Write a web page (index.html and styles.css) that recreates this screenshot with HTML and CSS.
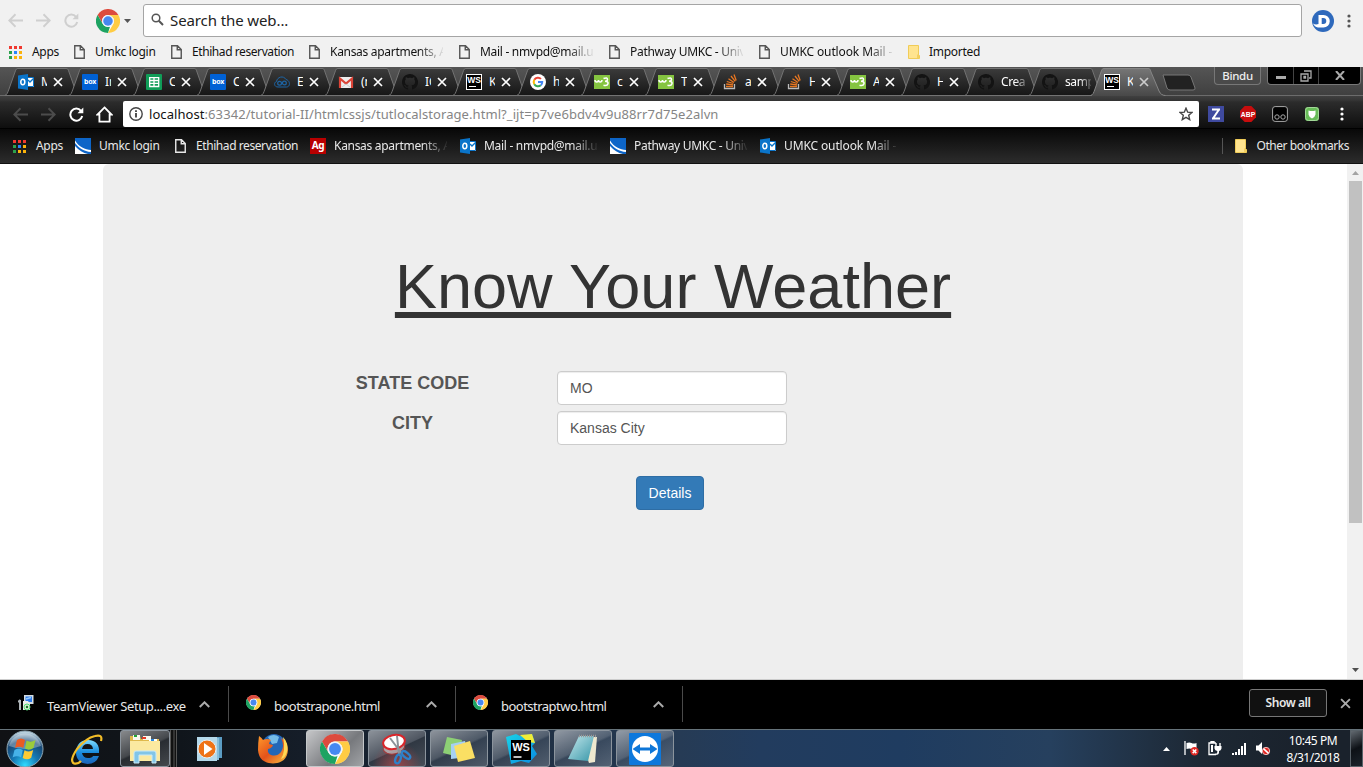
FILE: index.html
```html
<!DOCTYPE html>
<html lang="en">
<head>
<meta charset="utf-8">
<title>Know Your Weather</title>
<link rel="stylesheet" href="styles.css">
</head>
<body>
<svg class="defs" width="0" height="0" aria-hidden="true">
  <defs>
    <linearGradient id="gTab" x1="0" y1="0" x2="0" y2="1"><stop offset="0" stop-color="#3b3b3b"/><stop offset="1" stop-color="#161616"/></linearGradient>
    <linearGradient id="gActive" x1="0" y1="0" x2="0" y2="1"><stop offset="0" stop-color="#767676"/><stop offset="1" stop-color="#484848"/></linearGradient>
    <radialGradient id="gOrb" cx=".5" cy=".95" r=".9"><stop offset="0" stop-color="#31dcff"/><stop offset=".4" stop-color="#1478b4"/><stop offset=".75" stop-color="#174875"/><stop offset="1" stop-color="#b8cfdd"/></radialGradient>
    <linearGradient id="gIe" x1="0" y1="0" x2="0" y2="1"><stop offset="0" stop-color="#7fdcff"/><stop offset=".5" stop-color="#1b8fe0"/><stop offset="1" stop-color="#1b63b8"/></linearGradient>
    <linearGradient id="gFox" x1="0" y1="0" x2="1" y2="1"><stop offset="0" stop-color="#ff9a2a"/><stop offset=".5" stop-color="#e4521b"/><stop offset="1" stop-color="#f9c440"/></linearGradient>
    <linearGradient id="gPad" x1="0" y1="0" x2="1" y2="1"><stop offset="0" stop-color="#c4e8ec"/><stop offset="1" stop-color="#3796a8"/></linearGradient>
    <linearGradient id="gWs" x1="0" y1="0" x2="1" y2="1"><stop offset="0" stop-color="#18d2e8"/><stop offset="1" stop-color="#0a8be0"/></linearGradient>
  </defs>
  <symbol id="tab" viewBox="0 0 76 29"><path d="M.5 28.5C3 28 3.500 26 5 22L11 5C12 2 12.500 1.500 14 1.500H62C64 1.500 64 2 65 5L71 22C72.500 26 73 28 75.500 28.500Z" fill="url(#gTab)" stroke="#737373"/></symbol>
  <symbol id="tabOn" viewBox="0 0 76 29"><path d="M.5 29C3 28.500 3.500 26 5 22L11 5C12 2 12.500 1.500 14 1.500H58C60 1.500 60 2 61 5L69 24Q71 28.500 75.500 28.500V29Z" fill="url(#gActive)"/><path d="M.5 28.500C3 28 3.500 26 5 22L11 5C12 2 12.500 1.500 14 1.500H58C60 1.500 60 2 61 5L69 24Q71 28.500 75.500 28.500" fill="none" stroke="#858585"/></symbol>
  <symbol id="chrome" viewBox="0 0 48 48"><circle cx="24" cy="24" r="23.500" fill="#fff"/><path d="M3.200 12A24 24 0 0 1 44.800 12H24A12 12 0 0 0 13.600 30Z" fill="#dd4b3e"/><path d="M3.200 12L13.600 30A12 12 0 0 0 28 35.300L24 48A24 24 0 0 1 3.200 12Z" fill="#1da362"/><path d="M44.800 12A24 24 0 0 1 24 48L34.400 30A12 12 0 0 0 34.400 18L24 12Z" fill="#fc4"/><circle cx="24" cy="24" r="12" fill="#eef3fb"/><circle cx="24" cy="24" r="9.500" fill="#4688f1"/></symbol>
  <symbol id="apps" viewBox="0 0 13 13"><path d="M0 0h3v3H0zM5 0h3v3H5zM10 0h3v3h-3z" fill="#f0382f"/><path d="M0 5h3v3H0zM0 10h3v3H0z" fill="#2ba24c"/><path d="M5 5h3v3H5z" fill="#2a84fc"/><path d="M10 5h3v3h-3zM5 10h3v3H5zM10 10h3v3h-3z" fill="#fbb30b"/></symbol>
  <symbol id="doc" viewBox="0 0 11 14"><path d="M.75.750H6.500L10.250 4.500V13.250H.750ZM6.250.750V4.750H10.250" fill="none" stroke="currentColor" stroke-width="1.400"/></symbol>
  <symbol id="folder" viewBox="0 0 12 14"><path d="M.5.500H10.500V9.500L11.500 10.500V13.500H.500Z" fill="#ffe48f" stroke="#f0cc58"/><path d="M10 9.500V13" stroke="#e8b930"/></symbol>
  <symbol id="back" viewBox="0 0 14 14"><path d="M14 7H1.500M7 1.200L1.200 7L7 12.800" fill="none" stroke="currentColor" stroke-width="1.800"/></symbol>
  <symbol id="forward" viewBox="0 0 14 14"><path d="M0 7H12.500M7 1.200L12.800 7L7 12.800" fill="none" stroke="currentColor" stroke-width="1.800"/></symbol>
  <symbol id="reload" viewBox="0 0 15 15"><path d="M12 3.800A6 6 0 1 0 13.200 9" fill="none" stroke="currentColor" stroke-width="2"/><path d="M14.300.500V6.300H8.500Z" fill="currentColor"/></symbol>
  <symbol id="close" viewBox="0 0 10 10"><path d="M1 1L9 9M9 1L1 9" stroke="currentColor" stroke-width="1.700"/></symbol>
  <symbol id="dots" viewBox="0 0 4 14"><circle cx="2" cy="2" r="1.600"/><circle cx="2" cy="7" r="1.600"/><circle cx="2" cy="12" r="1.600"/></symbol>
  <symbol id="outlook" viewBox="0 0 16 16"><path d="M8 4h8v9H8z" fill="#fff"/><path d="M8 3.500h7.500v9H8" fill="none" stroke="#0a74c9"/><path d="M10 6l2 2 3.500-3.500" fill="none" stroke="#0a74c9" stroke-width="1.400"/><path d="M0 1.500L10 0V16L0 14.500Z" fill="#0a74c9"/><ellipse cx="4.800" cy="8" rx="2" ry="2.700" fill="none" stroke="#fff" stroke-width="1.500"/></symbol>
  <symbol id="sheets" viewBox="0 0 16 16"><rect width="16" height="16" rx="1" fill="#109d58"/><path d="M3.700 3.700h9v8.800h-9zM3.700 6.500h9M3.700 9.400h9M8 3.700v8.800" fill="none" stroke="#fff" stroke-width="1.300"/></symbol>
  <symbol id="cloud" viewBox="0 0 16 16"><path d="M4 13C0 13-.500 8.500 2.500 7.500C3 3 9.500 1 12 5.500C16.500 6.500 16.500 13 12.500 13Z" fill="none" stroke="#1d65a6"/><circle cx="5.600" cy="9.300" r="1.900" fill="none" stroke="#1d65a6" stroke-width="1.200"/><circle cx="10.400" cy="9" r="1.900" fill="none" stroke="#1d65a6" stroke-width="1.200"/></symbol>
  <symbol id="gmail" viewBox="0 0 16 16"><path d="M1 3h14v11H1z" fill="#eee"/><path d="M2 14V4.500L8 9.500L14 4.500V14" fill="none" stroke="#dc4437" stroke-width="2.200"/><path d="M4 13L8 10L12 13" stroke="#ccc" fill="none"/></symbol>
  <symbol id="github" viewBox="0 0 16 16"><path fill="#131313" d="M8 0C3.580 0 0 3.580 0 8c0 3.540 2.290 6.530 5.470 7.590.4.070.550-.170.550-.380v-1.490c-2.010.370-2.530-.490-2.690-.940-.090-.230-.480-.940-.820-1.130-.280-.150-.680-.520-.010-.530.630-.010 1.080.580 1.230.820.720 1.210 1.870.870 2.330.660.070-.520.280-.870.510-1.070-1.780-.2-3.640-.890-3.640-3.950 0-.870.310-1.590.820-2.150-.080-.2-.360-1.020.080-2.120 0 0 .670-.210 2.200.820.640-.180 1.320-.270 2-.270s1.360.090 2 .270c1.530-1.040 2.200-.820 2.200-.820.440 1.100.160 1.920.080 2.120.510.560.820 1.270.820 2.150 0 3.070-1.870 3.750-3.650 3.950.290.250.540.730.540 1.480v2.200c0 .210.150.460.550.380A8 8 0 0 0 8 0Z"/></symbol>
  <symbol id="google" viewBox="0 0 16 16"><circle cx="8" cy="8" r="8" fill="#fff"/><path d="M4.300 5.800A4.300 4.300 0 0 1 11 4.900" fill="none" stroke="#ea4335" stroke-width="2"/><path d="M4.300 5.800A4.500 4.500 0 0 0 4.300 10.200" fill="none" stroke="#fbbc05" stroke-width="2"/><path d="M4.300 10.200A4.300 4.300 0 0 0 10.800 11.200" fill="none" stroke="#34a853" stroke-width="2"/><path d="M8 8H12.200Q12.200 10.200 10.800 11.300" fill="none" stroke="#4285f4" stroke-width="2"/></symbol>
  <symbol id="w3" viewBox="0 0 16 14"><rect width="16" height="14" fill="#85c440"/><path d="M1 5q0 2 1.700 2T4.500 5q0 2 1.700 2T8 5M9.500 3.500q4-1.500 4 .8 0 2-2.500 2 3.500 0 3 2.500-.8 2.500-4.500 1.500" fill="none" stroke="#fff" stroke-width="1.500"/></symbol>
  <symbol id="so" viewBox="0 0 16 16"><path d="M2.500 10v4.500h10V10" fill="none" stroke="#bcbbbb" stroke-width="1.300"/><path d="M4 12.500h7M4.200 10l7 .8M4.800 7.500l6.500 2M6.500 4.700l5.500 3.800M9 2l4.200 5.300M12 .5l2.200 6" stroke="#e87722" stroke-width="1.300"/></symbol>
  <symbol id="umkc" viewBox="0 0 16 16"><path d="M0 0h16v16H0z" fill="#0d65c8"/><path d="M0 2.500C4 9 10 11.500 16 12V14C9 13.500 4 10 0 5ZM0 8C4 12.500 8 15 13 16H0Z" fill="#fff"/></symbol>
  <symbol id="chev" viewBox="0 0 10 6"><path d="M.7 5.300L5 1L9.300 5.300" fill="none" stroke="#aaa" stroke-width="1.800"/></symbol>
</svg>

<div class="outer-bar">
  <svg class="nav-i"><use href="#back"/></svg>
  <svg class="nav-i"><use href="#forward"/></svg>
  <svg class="nav-i"><use href="#reload"/></svg>
  <svg class="engine"><use href="#chrome"/></svg>
  <svg class="caret" viewBox="0 0 7 4"><path d="M0 0h7L3.500 4Z" fill="#555"/></svg>
  <div class="search">
    <svg width="13" height="13" viewBox="0 0 13 13"><circle cx="5" cy="5" r="3.800" fill="none" stroke="#555" stroke-width="1.500"/><path d="M7.800 7.800L12 12" stroke="#555" stroke-width="2"/></svg>
    <span>Search the web...</span>
  </div>
  <svg class="dash" viewBox="0 0 22 22"><circle cx="11" cy="11" r="11" fill="#2e69bc"/><path d="M6.500 5H11.500A6.200 6.200 0 0 1 11.500 17.500H6Q2.500 17 1 13.500Q3.500 15 6.500 14Z" fill="#fff"/><path d="M9.700 8H11.300A3 3 0 0 1 11.300 14H9.700Z" fill="#2e69bc"/></svg>
  <svg class="dots dim"><use href="#dots"/></svg>
</div>

<div class="marks light">
  <div class="mark m-apps"><svg class="i13"><use href="#apps"/></svg><span>Apps</span></div>
  <div class="mark m-97"><svg class="idoc"><use href="#doc"/></svg><span>Umkc login</span></div>
  <div class="mark m-138"><svg class="idoc"><use href="#doc"/></svg><span>Ethihad reservation</span></div>
  <div class="mark m-150"><svg class="idoc"><use href="#doc"/></svg><span class="fade">Kansas apartments, A</span></div>
  <div class="mark m-150"><svg class="idoc"><use href="#doc"/></svg><span class="fade">Mail - nmvpd@mail.u</span></div>
  <div class="mark m-150"><svg class="idoc"><use href="#doc"/></svg><span class="fade">Pathway UMKC - Univ</span></div>
  <div class="mark m-149"><svg class="idoc"><use href="#doc"/></svg><span class="fade wider">UMKC outlook Mail - </span></div>
  <div class="mark"><svg class="ifold"><use href="#folder"/></svg><span>Imported</span></div>
</div>

<div class="tabstrip">
  <div class="tab"><svg class="shape"><use href="#tab"/></svg><svg class="fav"><use href="#outlook"/></svg><span>M</span><svg class="x"><use href="#close"/></svg></div>
  <div class="tab"><svg class="shape"><use href="#tab"/></svg><i class="fav box">box</i><span>In</span><svg class="x"><use href="#close"/></svg></div>
  <div class="tab"><svg class="shape"><use href="#tab"/></svg><svg class="fav"><use href="#sheets"/></svg><span>C</span><svg class="x"><use href="#close"/></svg></div>
  <div class="tab"><svg class="shape"><use href="#tab"/></svg><i class="fav box">box</i><span>C</span><svg class="x"><use href="#close"/></svg></div>
  <div class="tab"><svg class="shape"><use href="#tab"/></svg><svg class="fav"><use href="#cloud"/></svg><span>E</span><svg class="x"><use href="#close"/></svg></div>
  <div class="tab"><svg class="shape"><use href="#tab"/></svg><svg class="fav"><use href="#gmail"/></svg><span>(n</span><svg class="x"><use href="#close"/></svg></div>
  <div class="tab"><svg class="shape"><use href="#tab"/></svg><svg class="fav"><use href="#github"/></svg><span>IC</span><svg class="x"><use href="#close"/></svg></div>
  <div class="tab"><svg class="shape"><use href="#tab"/></svg><i class="fav ws">WS</i><span>K</span><svg class="x"><use href="#close"/></svg></div>
  <div class="tab"><svg class="shape"><use href="#tab"/></svg><svg class="fav"><use href="#google"/></svg><span>h</span><svg class="x"><use href="#close"/></svg></div>
  <div class="tab"><svg class="shape"><use href="#tab"/></svg><svg class="fav"><use href="#w3"/></svg><span>c</span><svg class="x"><use href="#close"/></svg></div>
  <div class="tab"><svg class="shape"><use href="#tab"/></svg><svg class="fav"><use href="#w3"/></svg><span>T</span><svg class="x"><use href="#close"/></svg></div>
  <div class="tab"><svg class="shape"><use href="#tab"/></svg><svg class="fav"><use href="#so"/></svg><span>a</span><svg class="x"><use href="#close"/></svg></div>
  <div class="tab"><svg class="shape"><use href="#tab"/></svg><svg class="fav"><use href="#so"/></svg><span>H</span><svg class="x"><use href="#close"/></svg></div>
  <div class="tab"><svg class="shape"><use href="#tab"/></svg><svg class="fav"><use href="#w3"/></svg><span>A</span><svg class="x"><use href="#close"/></svg></div>
  <div class="tab"><svg class="shape"><use href="#tab"/></svg><svg class="fav"><use href="#github"/></svg><span>H</span><svg class="x"><use href="#close"/></svg></div>
  <div class="tab wide"><svg class="shape"><use href="#tab"/></svg><svg class="fav"><use href="#github"/></svg><span>Crea</span></div>
  <div class="tab wide"><svg class="shape"><use href="#tab"/></svg><svg class="fav"><use href="#github"/></svg><span>samp</span></div>
  <div class="tab on"><svg class="shape"><use href="#tabOn"/></svg><i class="fav ws">WS</i><span>K</span><svg class="x"><use href="#close"/></svg></div>
  <svg class="newtab" viewBox="0 0 34 17"><path d="M1 1H26Q28 1 29 3L33 14Q33.500 16 31 16H8Q6 16 5 14Z" fill="#222" stroke="#777"/></svg>
  <div class="user">Bindu</div>
  <div class="win">
    <div class="w1"><i></i></div>
    <div class="w2"><svg width="12" height="12" viewBox="0 0 12 12"><path d="M4 1h7v7H9M1 4h7v7H1zM4 6.500h1.500V8H4z" fill="none" stroke="#aaa" stroke-width="1.300"/></svg></div>
    <div class="w3"><svg width="10" height="9" viewBox="0 0 10 9"><path d="M1 0L9 9M9 0L1 9" stroke="#aaa" stroke-width="2"/></svg></div>
  </div>
</div>

<div class="toolbar">
  <svg class="nav-i off"><use href="#back"/></svg>
  <svg class="nav-i off"><use href="#forward"/></svg>
  <svg class="nav-i"><use href="#reload"/></svg>
  <svg class="home" viewBox="0 0 16 16"><path d="M8 1.400L14.500 8H12.800V14.700H3.200V8H1.500Z" fill="none" stroke="#fff" stroke-width="1.700"/></svg>
  <div class="url">
    <svg width="14" height="14" viewBox="0 0 14 14"><circle cx="7" cy="7" r="6.200" fill="none" stroke="#444" stroke-width="1.400"/><path d="M7 6v4.500M7 3.300v1.600" stroke="#333" stroke-width="1.700"/></svg>
    <span><b>localhost</b>:63342/tutorial-II/htmlcssjs/tutlocalstorage.html?_ijt=p7ve6bdv4v9u88rr7d75e2alvn</span>
    <svg class="star" viewBox="0 0 14 14"><path d="M7 1.200L8.700 5.200L13 5.500L9.700 8.300L10.700 12.600L7 10.300L3.300 12.600L4.300 8.300L1 5.500L5.300 5.200Z" fill="none" stroke="#444" stroke-width="1.400"/></svg>
  </div>
  <svg class="ext" viewBox="0 0 16 16"><path d="M0 0h16v16H0z" fill="#3f4a9f"/><path d="M4 3.500h8M11 3.500L5 12.500M4 12.500h8" stroke="#fff" stroke-width="2"/></svg>
  <svg class="ext" viewBox="0 0 16 16"><path d="M4.700 0h6.600L16 4.700v6.600L11.300 16H4.700L0 11.300V4.700Z" fill="#c70d0d"/><text x="8" y="10.500" text-anchor="middle" class="t-abp">ABP</text></svg>
  <svg class="ext" viewBox="0 0 16 16"><rect x=".6" y=".6" width="14.800" height="14.800" rx="2.500" fill="#000" stroke="#aaa"/><circle cx="5" cy="11" r="2.200" fill="none" stroke="#aaa"/><circle cx="11" cy="11" r="2.200" fill="none" stroke="#aaa"/></svg>
  <svg class="ext" viewBox="0 0 16 16"><rect x="1" y="1" width="14" height="14" rx="3" fill="#68bc58"/><rect x="1.500" y="1.500" width="13" height="13" rx="3" fill="none" stroke="#a4d89a"/><path d="M4.500 4.500Q8 5.500 11.500 4.500V8.500Q11 11 8 12.500Q5 11 4.500 8.500Z" fill="#fff"/></svg>
  <svg class="dots"><use href="#dots"/></svg>
</div>

<div class="marks dark">
  <div class="mark m-apps"><svg class="i13"><use href="#apps"/></svg><span>Apps</span></div>
  <div class="mark m-100"><svg class="i16"><use href="#umkc"/></svg><span>Umkc login</span></div>
  <div class="mark m-135"><svg class="idoc"><use href="#doc"/></svg><span>Ethihad reservation</span></div>
  <div class="mark m-150"><i class="i16 ag">Ag</i><span class="fade">Kansas apartments, A</span></div>
  <div class="mark m-150"><svg class="i16"><use href="#outlook"/></svg><span class="fade">Mail - nmvpd@mail.u</span></div>
  <div class="mark m-150"><svg class="i16"><use href="#umkc"/></svg><span class="fade">Pathway UMKC - Univ</span></div>
  <div class="mark m-149"><svg class="i16"><use href="#outlook"/></svg><span class="fade wider">UMKC outlook Mail - </span></div>
  <div class="mark other"><svg class="ifold"><use href="#folder"/></svg><span>Other bookmarks</span></div>
</div>

<div class="page">
  <main class="jumbotron">
    <h1>Know Your Weather</h1>
    <form class="form">
      <label for="state">STATE CODE</label>
      <input id="state" type="text" value="MO">
      <label for="city">CITY</label>
      <input id="city" type="text" value="Kansas City">
      <div class="actions"><button type="button">Details</button></div>
    </form>
  </main>
  <div class="scroll">
    <svg width="7" height="4" viewBox="0 0 7 4"><path d="M0 4L3.500 0L7 4Z" fill="#a3a3a3"/></svg>
    <div class="thumb"></div>
    <svg width="7" height="4" viewBox="0 0 7 4"><path d="M0 0L3.500 4L7 0Z" fill="#505050"/></svg>
  </div>
</div>

<div class="downloads">
  <div class="dl first">
    <svg class="setup" viewBox="0 0 16 16"><path d="M6 0h9.500v9H6z" fill="#d5dde2"/><path d="M7.500 1.500H14V7H7.500z" fill="#2d7bea"/><path d="M8 4l5-1.500" stroke="#9cf" stroke-width="1.500"/><path d="M2 5v10M0 7L2.500 5" stroke="#aeb4b8" stroke-width="2"/><path d="M5 6h5l2 3v6H5z" fill="#e9eeea"/><circle cx="9" cy="12" r="3" fill="#d6e9d4" stroke="#5d7"/><circle cx="9" cy="12" r="1.200" fill="#167a23"/></svg>
    <span>TeamViewer Setup....exe</span><svg class="chev"><use href="#chev"/></svg>
  </div>
  <div class="dl"><svg class="ch"><use href="#chrome"/></svg><span class="hs">bootstrapone.html</span><svg class="chev"><use href="#chev"/></svg></div>
  <div class="dl"><svg class="ch"><use href="#chrome"/></svg><span class="hs">bootstraptwo.html</span><svg class="chev"><use href="#chev"/></svg></div>
  <div class="showall">Show all</div>
  <svg class="dlx"><use href="#close"/></svg>
</div>

<div class="taskbar">
  <svg class="orb" viewBox="0 0 38 38"><circle cx="19" cy="19" r="18" fill="url(#gOrb)" stroke="#8da5b2"/><path d="M3 16A16.500 16.500 0 0 1 35 16Q19 22 3 16Z" fill="#fff" opacity=".32"/><path d="M11 10q4-3 8 0l-1.700 8q-4-2.500-8.300 0Z" fill="#ea5b23"/><path d="M20.500 10.500q4 2.500 9-.5l-2 8q-4.500 3-8.500 .5Z" fill="#9bcb3b"/><path d="M8.500 20q4-2.500 8.300 0l-1.700 7.500q-4-2.500-8.500 0Z" fill="#46b2e8"/><path d="M18.500 20.300q4.500 2.500 8.700-.2l-2 7.700q-4 3-8.500 .2Z" fill="#fdcb35"/></svg>
  <div class="launch ie"><svg width="34" height="32" viewBox="0 0 34 32"><path d="M29 20H12q1 5 6 5 4 0 5-2h6q-3 8-11.500 8Q6 30 6 19 7 7 18 7q12 .5 11 13ZM12 16h11q-.5-5-5.500-5Q13 11 12 16Z" fill="url(#gIe)"/><path d="M31 8Q33 1 25 3 16 5 7 16-1 28 4 30.500 8 31.500 11 28" fill="none" stroke="#f3bd28" stroke-width="2.200"/></svg></div>
  <div class="app explorer"><svg width="32" height="30" viewBox="0 0 32 30"><path d="M1 2h10l1 3h18v22H1z" fill="#dfb94c"/><path d="M4 1h7v5H4zM14 2h8v4h-8z" fill="#f8f8ee"/><path d="M5 1h3v2H5z" fill="#22a336"/><path d="M13 3h4v2h-4z" fill="#e33b25"/><path d="M20 5h8v4h-8z" fill="#fff"/><path d="M22 5h3v2h-3z" fill="#2888e2"/><path d="M1 7h30v20H1z" fill="#fbe9a0"/><path d="M5 29V19q0-2 2-2h18q2 0 2 2v10h-4v-8H10v8Z" fill="#82c5e7" stroke="#c9eaf8"/></svg></div>
  <div class="stack"></div>
  <div class="launch wmp"><svg width="27" height="26" viewBox="0 0 27 26"><path d="M7 1h19v21H7z" fill="#5b9dc4"/><path d="M4 2h19v22H4z" fill="#86bedc"/><path d="M1 1h20v24H1z" fill="#b5d9eb"/><circle cx="11" cy="13" r="9" fill="#ef7318" stroke="#e8eef2"/><path d="M8 7l8.500 6L8 19Z" fill="#fff"/></svg></div>
  <div class="launch fox"><svg width="32" height="31" viewBox="0 0 32 31"><circle cx="17" cy="13" r="12" fill="#2367b7"/><path d="M11 4q6-4 11 0l-2 6-5 1Z" fill="#75bde9"/><path d="M2 3q3 2 4 4 4-2 8 0-2 2-2 4l4 1q-1 3-5 4-1 4 3 6 6 2 10-3 4-6 0-14 7 4 7 12-1 13-15 13.500Q2 30 1 17 1 10 2 3Z" fill="url(#gFox)"/><path d="M26 4q6 6 4 15-2 6-6 7 5-8 2-22Z" fill="#ffd955"/></svg></div>
  <div class="app active"><svg class="bigch"><use href="#chrome"/></svg></div>
  <div class="app snip"><svg width="34" height="32" viewBox="0 0 34 32"><ellipse cx="14" cy="14" rx="11" ry="7" fill="#cfc4c4" stroke="#b33" opacity=".7" transform="rotate(-12 14 14)"/><ellipse cx="14" cy="9" rx="11" ry="7" fill="#fff" stroke="#d8262b" stroke-width="2" transform="rotate(-12 14 9)"/><path d="M10 5L22 21M17 3L19 22" stroke="#8b9299" stroke-width="2"/><ellipse cx="18" cy="26" rx="2.500" ry="4.500" fill="none" stroke="#2e81c9" stroke-width="2.400" transform="rotate(20 18 26)"/><ellipse cx="26" cy="22" rx="2.500" ry="5" fill="none" stroke="#2e81c9" stroke-width="2.400" transform="rotate(-50 26 22)"/></svg></div>
  <div class="app"><svg width="34" height="28" viewBox="0 0 34 28"><path d="M5 2l15 3-3 17L1 18Z" fill="#8dd075"/><path d="M9 9l14-3 3 16-17 2Z" fill="#a6d0f2"/><path d="M12 11l16-5 5 17-17 4Z" fill="#fadf63"/></svg></div>
  <div class="app"><svg width="34" height="34" viewBox="0 0 34 34"><path d="M2 5L12 2 16 4 28 2 31 11 28 14 33 22 25 31 17 29 7 32Z" fill="url(#gWs)"/><path d="M16 3L28 2 31 11 24 10Z" fill="#f1ed38"/><path d="M7 8h20v20H7z" fill="#000"/><text x="17" y="18.500" text-anchor="middle" class="t-wsbig">WS</text><path d="M9.500 25h8" stroke="#fff" stroke-width="1.500"/></svg></div>
  <div class="app"><svg width="32" height="30" viewBox="0 0 32 30"><path d="M13 3h17l-2 25-6 1Z" fill="#eee9cf"/><path d="M12 2h15L21 27 1 25Z" fill="url(#gPad)"/><path d="M12 2h17" stroke="#999" stroke-width="2.500" stroke-dasharray="1 1"/></svg></div>
  <div class="app"><svg width="32" height="32" viewBox="0 0 32 32"><rect width="32" height="32" rx="1" fill="#0d78dc"/><circle cx="16" cy="16" r="13" fill="#fff"/><path d="M3.500 16L11 11V14.500H21V11L28.500 16L21 21V17.500H11V21Z" fill="#0e76d8"/></svg></div>
  <div class="tray">
    <svg width="7" height="4" viewBox="0 0 7 4"><path d="M0 4L3.500 0L7 4Z" fill="#fff"/></svg>
    <svg width="15" height="15" viewBox="0 0 15 15"><path d="M1 0v14" stroke="#fff" stroke-width="1.300"/><path d="M2.500 2q3-1 5 0t5 0v6q-3 1-5 0t-5 0Z" fill="#fff"/><circle cx="10.500" cy="10.300" r="4.200" fill="#e02824"/><path d="M8.700 8.500l3.600 3.600M12.300 8.500l-3.600 3.600" stroke="#fff" stroke-width="1.500"/></svg>
    <svg width="14" height="15" viewBox="0 0 14 15"><path d="M3 2V.7h3V2M8 2H1v11.500h7" fill="none" stroke="#fff" stroke-width="1.300"/><path d="M3 4h2v7H3z" fill="#fff"/><path d="M8 2v3M12 2v3" stroke="#fff" stroke-width="1.400"/><path d="M6.500 5h7v2.500q-.5 2-2.500 2.500v1.500q0 2.500-4 2.500v-1.300q2.300 0 2.300-1.500V10q-2.300-.5-2.800-2.500Z" fill="#fff"/></svg>
    <svg width="15" height="12" viewBox="0 0 15 12"><path d="M1 10v2M4 9v3M7 6v6M10 3v9M13 0v12" stroke="#fff" stroke-width="2"/></svg>
    <svg width="15" height="15" viewBox="0 0 15 15"><path d="M0 4.500h2.500L6 1V13L2.500 9.500H0Z" fill="#fff"/><circle cx="10" cy="10" r="3.700" fill="#e02824" stroke="#f7c9c7" stroke-width=".9"/><path d="M7.500 7.600L12.500 12.400" stroke="#fff" stroke-width="1.500"/></svg>
  </div>
  <div class="clock"><span>10:45 PM</span><span>8/31/2018</span></div>
  <div class="peek"></div>
</div>
</body>
</html>
```

FILE: styles.css
```css
* { box-sizing: border-box; }
body {
  margin: 0; width: 1363px; height: 767px; overflow: hidden;
  display: flex; flex-direction: column;
  font: 12px "Noto Sans", "Open Sans", sans-serif; color: #111; background: #fff;
}
svg { display: block; flex: none; }
.defs { position: absolute; }
.t-wsbig { font: bold 11px "Liberation Sans", sans-serif; fill: #fff; }
.t-abp { font: bold 6.800px "Liberation Sans", sans-serif; fill: #fff; }
.nav-i { width: 15px; height: 15px; margin-right: 13px; }
.dots { width: 4px; height: 14px; }
.dim { fill: #555; }

.outer-bar { height: 41px; flex: none; background: #f1f1f1; display: flex; align-items: center; padding-left: 8px; color: #cfcfcf; }
.outer-bar .engine { width: 24px; height: 24px; margin-left: 4px; }
.caret { width: 7px; height: 4px; margin: 0 12px 0 4px; }
.search {
  width: 1159px; height: 33px; border: 1px solid #a5a5a5; border-radius: 3px; background: #fff;
  display: flex; align-items: center; gap: 6px; padding: 0 0 2px 7px; color: #222;
  font-size: 15px; letter-spacing: -.1px;
}
.dash { width: 22px; height: 22px; margin: 1px 13px 0 10px; }

.marks { display: flex; flex: none; align-items: center; letter-spacing: -.3px; white-space: nowrap; }
.mark { display: flex; flex: none; align-items: center; height: 20px; line-height: 18px; }
.mark span { padding-bottom: 1px; }
.m-97 { width: 97px; } .m-138 { width: 138px; letter-spacing: -.42px; } .m-150 { width: 150px; } .m-149 { width: 149px; }
.m-100 { width: 100px; } .m-135 { width: 135px; letter-spacing: -.42px; }
.i13 { width: 13px; height: 13px; margin-right: 10px; }
.idoc { width: 11px; height: 14px; margin-right: 10px; }
.ifold { width: 12px; height: 14px; margin-right: 9px; }
.i16 { width: 16px; height: 16px; margin-right: 8px; }
.ag { background: #b90000; color: #fff; font: bold 10px/15px "Noto Sans", sans-serif; text-align: center; }
.fade { width: 113px; overflow: hidden; white-space: pre; -webkit-mask-image: linear-gradient(90deg, #000 88px, transparent 115px); mask-image: linear-gradient(90deg, #000 88px, transparent 115px); }
.wider { letter-spacing: -.12px; }
.light { height: 26px; background: #f1f1f1; padding: 0 0 4px 9px; }
.light .idoc { color: #555; }
.light .m-apps { width: 65px; }
.dark { height: 36px; padding-left: 13px; color: #e8e8e8; background: linear-gradient(#080808, #2c2c2c); border-top: 1px solid #000; border-bottom: 1px solid #111; }
.dark .m-apps { width: 62px; }
.other { margin-left: auto; margin-right: 14px; border-left: 1px solid #555; padding-left: 12px; height: 16px; letter-spacing: -.46px; }
.other .ifold { margin-right: 10px; }

.tabstrip { height: 29px; flex: none; display: flex; padding-left: 4px; background: linear-gradient(#555, #404040); border-bottom: 1px solid #6c6c6c; }
.tab { position: relative; width: 76px; height: 29px; margin-right: -12px; flex: none; display: flex; align-items: center; padding: 1px 0 0 14px; color: #fff; }
.tab.on { margin-left: -2px; }
.shape { position: absolute; left: 0; top: 0; width: 76px; height: 29px; }
.tab > :not(.shape) { position: relative; }
.fav { width: 16px; height: 16px; flex: none; }
.box { background: #0061d5; border-radius: 1px; color: #fff; font: bold 7px/15px "Noto Sans", sans-serif; text-align: center; letter-spacing: -.2px; }
.ws { background: linear-gradient(#fff, #fff) 2px 11px / 7px 1px no-repeat #000; border: 1px solid #fff; color: #fff; font: bold 8.500px/10px "Liberation Sans", sans-serif; text-align: center; letter-spacing: -.2px; }
.tab span { width: 6px; margin: -1px 6px 0 7px; overflow: hidden; white-space: nowrap; }
.tab.wide span { width: 26px; letter-spacing: -.4px; -webkit-mask-image: linear-gradient(90deg, #000 14px, transparent 29px); mask-image: linear-gradient(90deg, #000 14px, transparent 29px); }
.x { width: 10px; height: 10px; }
.on .x { color: #ccc; }
.newtab { width: 34px; height: 17px; margin: 7px 0 0 8px; }
.user { margin-left: 18px; width: 47px; height: 18px; border: 1px solid #777; border-top: 0; border-radius: 0 0 4px 4px; background: #4a4a4a; color: #eee; font-weight: 500; font-size: 11.500px; letter-spacing: -.3px; line-height: 17px; text-align: center; }
.win { display: flex; margin-left: 6px; height: 18px; border: 1px solid #777; border-top: 0; border-radius: 0 0 4px 4px; overflow: hidden; background: #000; }
.win div { display: flex; justify-content: center; align-items: center; }
.w1 { width: 25px; } .w2 { width: 26px; border: solid #444; border-width: 0 1px; } .w3 { width: 41px; }
.w1 i { width: 10px; height: 3px; background: #aaa; margin-top: 3px; }

.toolbar { height: 32px; flex: none; display: flex; align-items: center; padding: 4px 0 0 13px; color: #fff; fill: #fff; background: linear-gradient(#404040 0, #363636 4px, #2c2c2c 6px, #0e0e0e 100%); }
.toolbar .off { color: #4c4c4c; }
.home { width: 17px; height: 17px; margin-left: -1px; }
.url { width: 1076px; height: 26px; margin-left: 10px; background: #fff; border-radius: 2px; display: flex; align-items: center; padding: 0 6px; color: #858585; font-size: 13px; letter-spacing: .07px; }
.url span { margin: -1px 0 0 6px; white-space: nowrap; }
.url b { font-weight: 400; color: #111; }
.star { width: 14px; height: 14px; margin-left: auto; }
.ext { width: 16px; height: 16px; margin-left: 16px; }
.url + .ext { margin-left: 9px; }
.toolbar .dots { margin-left: 20px; }

.page { flex: none; height: 516px; display: flex; border-bottom: 1px solid #ccc; font-family: "Liberation Sans", Arial, sans-serif; }
.jumbotron { width: 1140px; margin-left: 103px; background: #eee; border-radius: 6px 6px 0 0; padding-top: 88px; }
h1 { margin: 0; text-align: center; font-size: 63px; font-weight: 400; line-height: 69px; color: #333; letter-spacing: .03px; text-decoration: underline; text-decoration-thickness: 6px; text-underline-offset: 4px; text-decoration-skip-ink: none; }
.form { margin: 50px 0 0 165px; display: grid; grid-template-columns: 289px 230px; row-gap: 6px; }
label { padding-top: 1px; text-align: center; font-weight: 700; font-size: 18px; line-height: 22px; color: #555; }
input { height: 34px; border: 1px solid #ccc; border-radius: 4px; padding: 0 12px; font: 14px "Liberation Sans", Arial, sans-serif; color: #555; background: #fff; box-shadow: inset 0 1px 1px rgba(0,0,0,.075); }
.actions { grid-column: 2; padding: 25px 0 0 79px; }
button { width: 68px; height: 34px; padding: 0; border: 1px solid #2e6da4; border-radius: 4px; background: #337ab7; color: #fff; font: 14px "Liberation Sans", Arial, sans-serif; display: block; }
.scroll { margin-left: auto; width: 16px; background: #f1f1f1; display: flex; flex-direction: column; align-items: center; padding-top: 7px; }
.thumb { width: 13px; height: 342px; margin-top: 6px; background: #c1c1c1; }
.scroll svg:last-child { margin: auto 0 7px; }

.downloads { height: 49px; flex: none; background: #000; display: flex; align-items: center; color: #e8e8e8; font-size: 13px; letter-spacing: -.4px; }
.dl { width: 227px; height: 36px; margin-top: -2px; border-right: 1px solid #4a4a4a; display: flex; align-items: center; padding: 5px 18px 0 17px; }
.dl.first { width: 229px; padding-left: 18px; }
.hs { letter-spacing: -.52px; }
.setup { width: 16px; height: 16px; margin: -7px 13px 0 0; }
.ch { width: 15px; height: 15px; margin: -7px 13px 0 0; }
.chev { width: 11px; height: 7px; margin: -4px 0 0 auto; }
.showall { margin-left: auto; margin-right: 13px; width: 78px; height: 28px; margin-top: -3px; border: 1px solid #777; border-radius: 3px; background: #111; font-size: 12px; font-weight: 600; line-height: 25px; text-align: center; }
.dlx { width: 11px; height: 11px; margin: -3px 12px 0 0; color: #aaa; }

.taskbar { height: 38px; flex: none; display: flex; align-items: center; padding-left: 6px; border-top: 1px solid #66737a; background: linear-gradient(90deg, #101215 0, #10151b 180px, #151d28 300px, #263b55 680px, #223c5e 760px, #1f3c60 900px, #26405e 1050px, #1d2834 1200px, #1a222c 1300px); }
.orb { width: 38px; height: 38px; }
.launch { display: flex; }
.ie { margin-left: 26px; }
.app { width: 58px; height: 37px; margin-right: 4px; border: 1px solid #8b949d; border-radius: 3px; display: flex; justify-content: center; align-items: center; background: linear-gradient(155deg, rgba(255,255,255,.5), rgba(255,255,255,.22) 48%, rgba(255,255,255,.1) 52%, rgba(255,255,255,.22)); flex: none; }
.explorer { width: 50px; margin: 0 0 0 16px; }
.stack { width: 7px; height: 37px; border: solid #555; border-width: 0 1px; background: linear-gradient(90deg, #111 2px, #555 3px, #111 4px); }
.wmp { margin-left: 19px; }
.fox { margin: 0 17px 0 34px; }
.active { background: linear-gradient(135deg, #c5c6c8, #77797d 60%, #a1a3a6); border-color: #c5c8ca; }
.bigch { width: 30px; height: 30px; }
.snip { background: radial-gradient(circle at 50% 100%, rgba(190,70,70,.7), transparent 55%), linear-gradient(155deg, #8c929a, #4f5661 50%, #303843 52%, #474e58); }
.tray { margin-left: auto; display: flex; align-items: center; gap: 9.500px; }
.tray svg:first-child { margin-right: 4px; }
.clock { width: 74px; margin-left: 5px; display: flex; flex-direction: column; align-items: center; color: #fff; font-size: 12px; line-height: 17px; letter-spacing: -.45px; }
.peek { width: 13px; height: 37px; border: 1px solid #596269; background: linear-gradient(155deg, #626970, #0d1116 50%, #1b232b); }
```
